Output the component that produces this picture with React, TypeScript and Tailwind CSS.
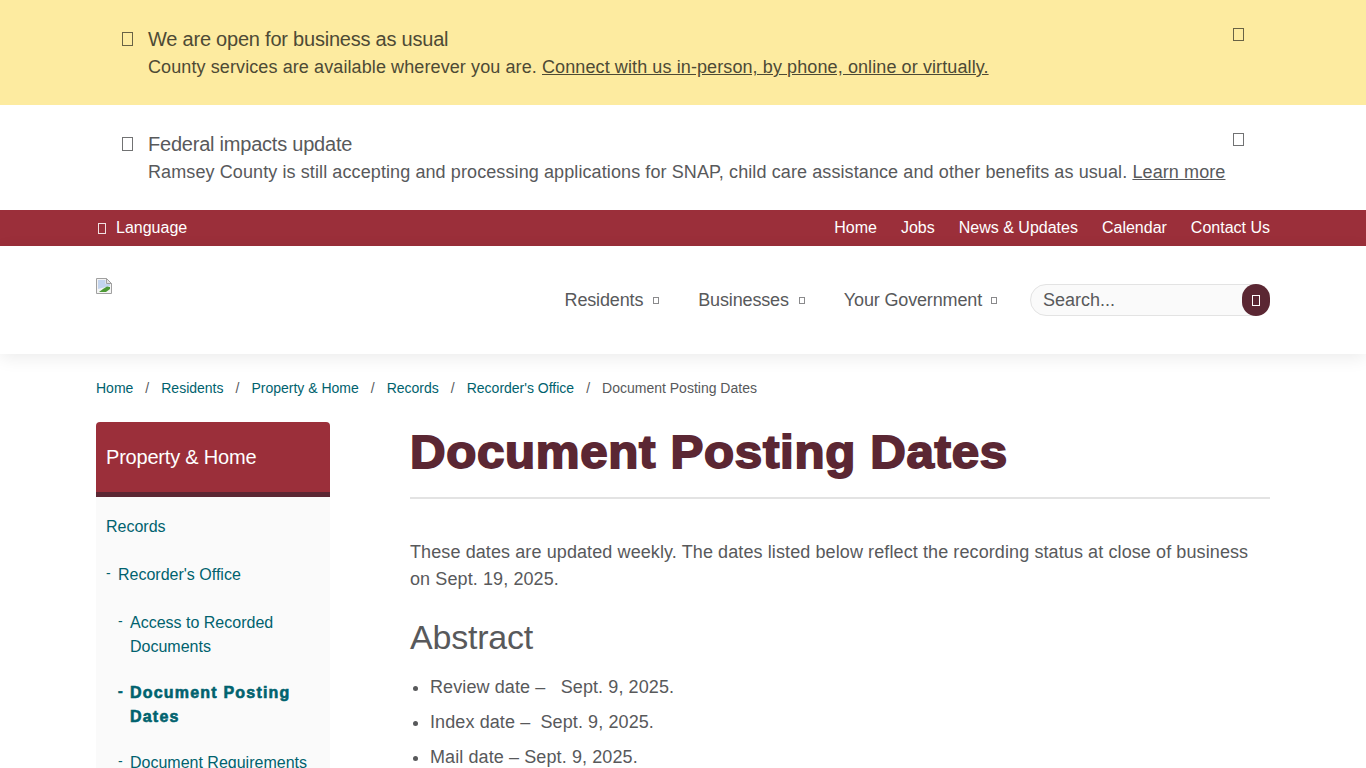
const Tofu = ({ className = "" }: { className?: string }) => (
  <span className={`inline-block border border-current ${className}`} />
);

const BrokenImage = () => (
  <svg width="16" height="16" viewBox="0 0 16 16" className="block">
    <path d="M0.5 0.5H10.5L15.5 5.5V15.5H0.5Z" fill="#f4f4f4" stroke="#a0a0a0" />
    <path d="M10.5 0.5V5.5H15.5Z" fill="#e4e4e4" stroke="#a0a0a0" />
    <path d="M2 2H9.5V6H14V8L2 11Z" fill="#c3d4ee" />
    <path d="M3 14L7 11L11 8.5L14 9V11L10 14Z" fill="#4d9a35" />
  </svg>
);

function Alert({ bg, text, title, children }: { bg: string; text: string; title: string; children: React.ReactNode }) {
  return (
    <div className={`${bg} ${text} h-[105px] pl-[122px] pt-[27px] flex relative`}>
      <Tofu className="w-[11px] h-[14px] mt-[5px] mr-[15px] opacity-85" />
      <div>
        <div className="text-[20px] leading-[24px] tracking-[-0.22px]">{title}</div>
        <div className="text-[18px] leading-[27px] mt-[3px] tracking-[0.1px]">{children}</div>
      </div>
      <Tofu className="absolute left-[1233px] top-[28px] w-[11px] h-[13px] opacity-85" />
    </div>
  );
}

const crumbs = ["Home", "Residents", "Property & Home", "Records", "Recorder's Office"];

function SideLink({ indent, bold, children, mt }: { indent: string; bold?: boolean; children: React.ReactNode; mt: string }) {
  return (
    <div className={`flex ${indent} ${mt} text-[16px] leading-[24px] text-[#00626e]`}>
      <span className={`w-[12px] shrink-0 text-[14px] leading-[20px] ${bold ? "font-bold [-webkit-text-stroke:0.6px_#00626e]" : ""}`}>-</span>
      <span className={bold ? "font-bold [-webkit-text-stroke:0.6px_#00626e] tracking-[1.2px]" : ""}>{children}</span>
    </div>
  );
}

export default function App() {
  return (
    <div className="h-[768px] overflow-hidden bg-white text-[#58595b] font-['Liberation_Sans',Arial,sans-serif]">
      <Alert bg="bg-[#fdeba0]" text="text-[#4d4a35]" title="We are open for business as usual">
        County services are available wherever you are.{" "}
        <a className="underline">Connect with us in-person, by phone, online or virtually.</a>
      </Alert>
      <Alert bg="bg-white" text="text-[#58595b]" title="Federal impacts update">
        Ramsey County is still accepting and processing applications for SNAP, child care assistance and other benefits as usual.{" "}
        <a className="underline">Learn more</a>
      </Alert>

      <div className="h-[36px] bg-[#9b2f3a] text-white text-[16px] px-[96px] flex items-center justify-between">
        <div className="flex items-center">
          <Tofu className="w-[8px] h-[11px] ml-[2px] mr-[10px] opacity-85" />
          <span>Language</span>
        </div>
        <div className="flex gap-[24px]">
          <a>Home</a>
          <a>Jobs</a>
          <a>News &amp; Updates</a>
          <a>Calendar</a>
          <a>Contact Us</a>
        </div>
      </div>

      <header className="relative h-[108px] px-[96px] flex justify-between bg-white shadow-[0_4px_16px_rgba(0,0,0,0.08)]">
        <div className="pt-[32px]">
          <BrokenImage />
        </div>
        <div className="flex items-center text-[18px] tracking-[-0.15px]">
          <a className="flex items-center">
            Residents
            <Tofu className="w-[6px] h-[7px] ml-[10px] opacity-70" />
          </a>
          <a className="flex items-center ml-[39px]">
            Businesses
            <Tofu className="w-[6px] h-[7px] ml-[10px] opacity-70" />
          </a>
          <a className="flex items-center ml-[39px]">
            Your Government
            <Tofu className="w-[6px] h-[7px] ml-[9px] opacity-70" />
          </a>
          <div className="ml-[33px] w-[240px] h-[32px] relative rounded-full border border-[#e3e3e3] bg-[#fafafa] pl-[12px] leading-[30px] tracking-normal">
            Search...
            <span className="absolute -right-px -top-px w-[28px] h-[32px] rounded-full bg-[#5b2733] text-white flex items-center justify-center">
              <Tofu className="w-[8px] h-[11px]" />
            </span>
          </div>
        </div>
      </header>

      <nav className="px-[96px] pt-[26px] flex text-[14px] leading-[16px]">
        {crumbs.map((c) => (
          <span key={c} className="flex">
            <a className="text-[#00626e]">{c}</a>
            <span className="mx-[12px]">/</span>
          </span>
        ))}
        <span>Document Posting Dates</span>
      </nav>

      <div className="px-[96px] pt-[26px] flex">
        <aside className="w-[234px] shrink-0 mr-[80px]">
          <div className="h-[75px] rounded-t-[4px] bg-[#9b2f3a] border-b-[5px] border-[#5b2733] text-white text-[20px] pl-[10px] pt-[22px] leading-[26px] tracking-[-0.2px]">
            Property &amp; Home
          </div>
          <div className="bg-[#fafafa] px-[10px] pt-[18px] h-[300px]">
            <a className="block text-[16px] leading-[24px] text-[#00626e]">Records</a>
            <SideLink indent="ml-0" mt="mt-[24px]">Recorder's Office</SideLink>
            <SideLink indent="ml-[12px]" mt="mt-[24px]">Access to Recorded Documents</SideLink>
            <SideLink indent="ml-[12px]" mt="mt-[22px]" bold>Document Posting Dates</SideLink>
            <SideLink indent="ml-[12px]" mt="mt-[22px]">Document Requirements</SideLink>
          </div>
        </aside>

        <main className="flex-1">
          <div className="h-[77px] border-b-2 border-[#e3e3e3]">
            <h1 className="inline-block origin-left scale-x-[1.07] whitespace-nowrap text-[46px] leading-[60px] font-bold tracking-[0.65px] text-[#5b2733] [-webkit-text-stroke:1.8px_#5b2733]">
              Document Posting Dates
            </h1>
          </div>
          <p className="mt-[40px] text-[18px] leading-[27px] tracking-[0.1px]">
            These dates are updated weekly. The dates listed below reflect the recording status at close of business on Sept. 19, 2025.
          </p>
          <h2 className="mt-[22px] text-[34px] leading-[44px] tracking-[-0.2px]">Abstract</h2>
          <ul className="mt-[15px] pl-[20px] list-disc text-[18px] leading-[27px] tracking-[0.1px]">
            <li className="mb-[8px]">Review date –&nbsp;&nbsp; Sept. 9, 2025.</li>
            <li className="mb-[8px]">Index date –&nbsp; Sept. 9, 2025.</li>
            <li>Mail date – Sept. 9, 2025.</li>
          </ul>
        </main>
      </div>
    </div>
  );
}
